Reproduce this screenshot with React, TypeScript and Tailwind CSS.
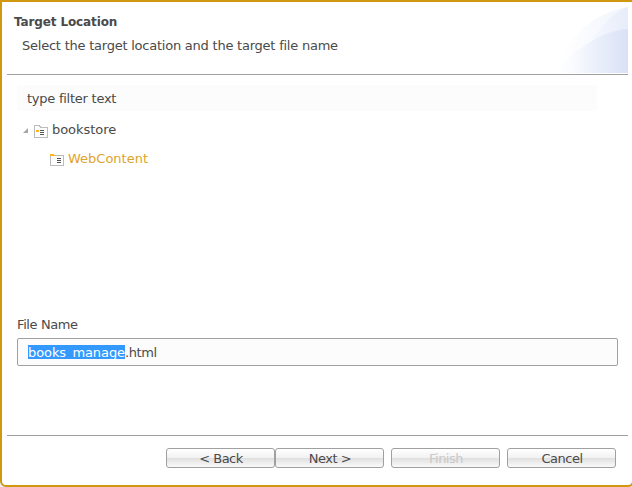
import React from "react";

function ExpandedArrow() {
  return (
    <svg className="mt-[3px] h-[5px] w-[5px] shrink-0" viewBox="0 0 5 5">
      <path d="M5 0V5H0Z" fill="#a6a6a6" />
    </svg>
  );
}

function ProjectIcon() {
  return (
    <svg className="h-[13px] w-[14px] shrink-0" viewBox="0 0 14 13" shapeRendering="crispEdges">
      <path d="M.5 12.5V.5H5.5V1.5H6.5V2.5H13.5V12.5Z" fill="#fff" stroke="#bcbcbc" />
      <path d="M2 5H5V7H2Z" fill="#fdb913" />
      <path d="M6 5H10V6H6ZM6 7H10V8H6ZM6 9H10V10H6Z" fill="#555" />
    </svg>
  );
}

function FolderIcon() {
  return (
    <svg className="h-[12px] w-[14px] shrink-0" viewBox="0 0 14 12" shapeRendering="crispEdges">
      <path d="M.5 11.5V1.5H13.5V11.5Z" fill="#fff" stroke="#bcbcbc" />
      <path d="M0 0H4V1H5V2H0Z" fill="#fdb913" />
      <path d="M7 4H11V5H7ZM7 6H11V7H7ZM7 8H11V9H7Z" fill="#555" />
    </svg>
  );
}

function Banner() {
  return (
    <svg className="h-[66px] w-[74px] shrink-0" viewBox="0 0 74 66">
      <defs>
        <linearGradient id="outer" x1="0" x2="1">
          <stop offset="0.1" stopColor="#ffffff" />
          <stop offset="1" stopColor="#f0f4fc" />
        </linearGradient>
        <linearGradient id="inner" x1="0" x2="1">
          <stop offset="0" stopColor="#f9fbfe" />
          <stop offset="1" stopColor="#e6ecfa" />
        </linearGradient>
        <linearGradient id="lower" x1="0" x2="1">
          <stop offset="0" stopColor="#ffffff" />
          <stop offset="0.25" stopColor="#fafbfe" />
          <stop offset="0.55" stopColor="#ebf0fb" />
          <stop offset="1" stopColor="#dae1f6" />
        </linearGradient>
      </defs>
      <path d="M0 66C16 24 44 5 74 0V66Z" fill="url(#outer)" />
      <path d="M28 66C34 34 52 7 74 0V66Z" fill="url(#inner)" />
      <path d="M0 66C22 42 46 24 74 22V66Z" fill="url(#lower)" />
    </svg>
  );
}

function Button({ label, disabled = false }: { label: string; disabled?: boolean }) {
  return (
    <button
      disabled={disabled}
      className={
        "flex h-5 w-[109px] shrink-0 justify-center rounded-[3px] border border-[#a0a0a0] bg-[linear-gradient(to_bottom,#fff_0%,#f2f2f2_49%,#dfdfdf_50%,#fafafa_100%)] pt-[2px] pl-px leading-4 tracking-[-0.5px] " +
        (disabled ? "text-[#c9c9c9]" : "text-[#4a4a4a]")
      }
    >
      {label}
    </button>
  );
}

export default function App() {
  return (
    <div className="h-[487px] w-[632px] overflow-hidden bg-[#eee]">
      <main className="flex h-[487px] w-[634px] flex-col rounded-b-[6px] border-2 border-[#cf980f] bg-white pl-[5px] font-['DejaVu_Sans',Verdana,sans-serif] text-[13px] leading-4 text-[#4a4a4a]">
        <header className="flex h-[73px] w-[621px] shrink-0 justify-between border-b border-[#a0a0a0]">
          <div className="pt-3 pl-[7px]">
            <h1 className="text-[12px] leading-4 font-bold tracking-[-0.12px]">Target Location</h1>
            <p className="mt-2 pl-2 tracking-[-0.23px]">Select the target location and the target file name</p>
          </div>
          <div className="pt-[5px]">
            <Banner />
          </div>
        </header>

        <section className="flex h-[360px] shrink-0 flex-col pt-[10px] pl-[10px]">
          <div className="h-[26px] w-[580px] bg-[#fcfcfc] pt-[6px] pl-[10px] tracking-[-0.25px]">type filter text</div>
          <div className="mt-[11px] flex h-4 items-start pl-[6px]">
            <div className="pt-[3px]"><ExpandedArrow /></div>
            <div className="ml-[6px] pt-[3px]"><ProjectIcon /></div>
            <span className="ml-1 tracking-[-0.05px]">bookstore</span>
          </div>
          <div className="mt-[13px] flex h-4 items-start pl-[33px] text-[#dfa32b]">
            <div className="pt-[3px]"><FolderIcon /></div>
            <span className="ml-1">WebContent</span>
          </div>
          <label className="mt-[150px] h-4 tracking-[-0.4px]">File Name</label>
          <div className="mt-[5px] h-7 w-[601px] shrink-0 rounded-[2px] border border-[#a0a0a0] bg-[#fcfcfc] pt-[6px] pl-[10px]">
            <span className="inline-block h-[14px] w-[97px] bg-[#3399ff] align-top leading-4 tracking-[-0.09px] text-white">books_manage</span>
            <span className="inline-block align-top tracking-[-0.4px]">.html</span>
          </div>
        </section>

        <footer className="flex w-[621px] grow border-t border-[#a0a0a0] pt-3 pl-[159px]">
          <Button label="< Back" />
          <Button label="Next >" />
          <div className="w-[7px]" />
          <Button label="Finish" disabled />
          <div className="w-[7px]" />
          <Button label="Cancel" />
        </footer>
      </main>
    </div>
  );
}
